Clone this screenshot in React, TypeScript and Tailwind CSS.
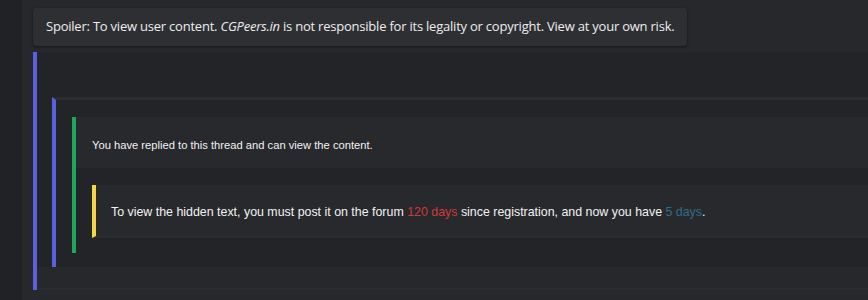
export default function App() {
  return (
    <div className="flex min-h-[300px] w-full bg-[#212226]">
      <div className="w-[22px] shrink-0 bg-[#212226]" />
      <div className="flex-1 bg-[#27282c] pl-[11px] pt-[8px]">
        <SpoilerNotice />
        <div className="mt-[6px] border-l-4 border-[#5b60e0] bg-[#232428]">
          <div className="h-[45px]" />
          <div className="pl-[15px]">
            <div className="border-l-4 border-t-[3px] border-l-[#5b60e0] border-t-[#2c2d31]">
              <div className="h-[17px]" />
              <div className="pl-[16px]">
                <div className="border-l-4 border-[#22a45c]">
                  <div className="flex h-[51px] items-center bg-[#28292d] pl-[16px] pt-[5px] text-[11.2px] text-[#f2f2f2] [font-family:'Liberation_Sans',Arial,sans-serif]">
                    You have replied to this thread and can view the content.
                  </div>
                  <div className="h-[17px]" />
                  <div className="pl-[16px]">
                    <div className="flex h-[53px] items-center border-b-2 border-l-4 border-b-[#2c2d31] border-l-[#f3d54a] bg-[#28292d] pl-[15px] pt-[3px] text-[12.4px] text-[#f2f2f2] [font-family:'Liberation_Sans',Arial,sans-serif]">
                      <span>
                        To view the hidden text, you must post it on the forum{" "}
                        <span className="text-[#cf3a3a]">120 days</span> since
                        registration, and now you have{" "}
                        <span className="text-[#2f6d8c]">5 days</span>.
                      </span>
                    </div>
                  </div>
                  <div className="h-[15px]" />
                </div>
              </div>
              <div className="h-[14px]" />
            </div>
          </div>
          <div className="h-[23px] border-b-2 border-[#2b2c30] bg-[#27282c]" />
        </div>
      </div>
    </div>
  );
}

function SpoilerNotice() {
  return (
    <div className="flex h-[38px] w-fit items-center rounded-sm bg-[#2e2f33] px-[13px] text-[13px] tracking-[-0.22px] text-[#ededed] shadow-[0_1px_3px_rgba(0,0,0,0.45)] [font-family:'Open_Sans',sans-serif]">
      <span>
        Spoiler: To view user content. <i>CGPeers.in</i> is not responsible for
        its legality or copyright. View at your own risk.
      </span>
    </div>
  );
}
